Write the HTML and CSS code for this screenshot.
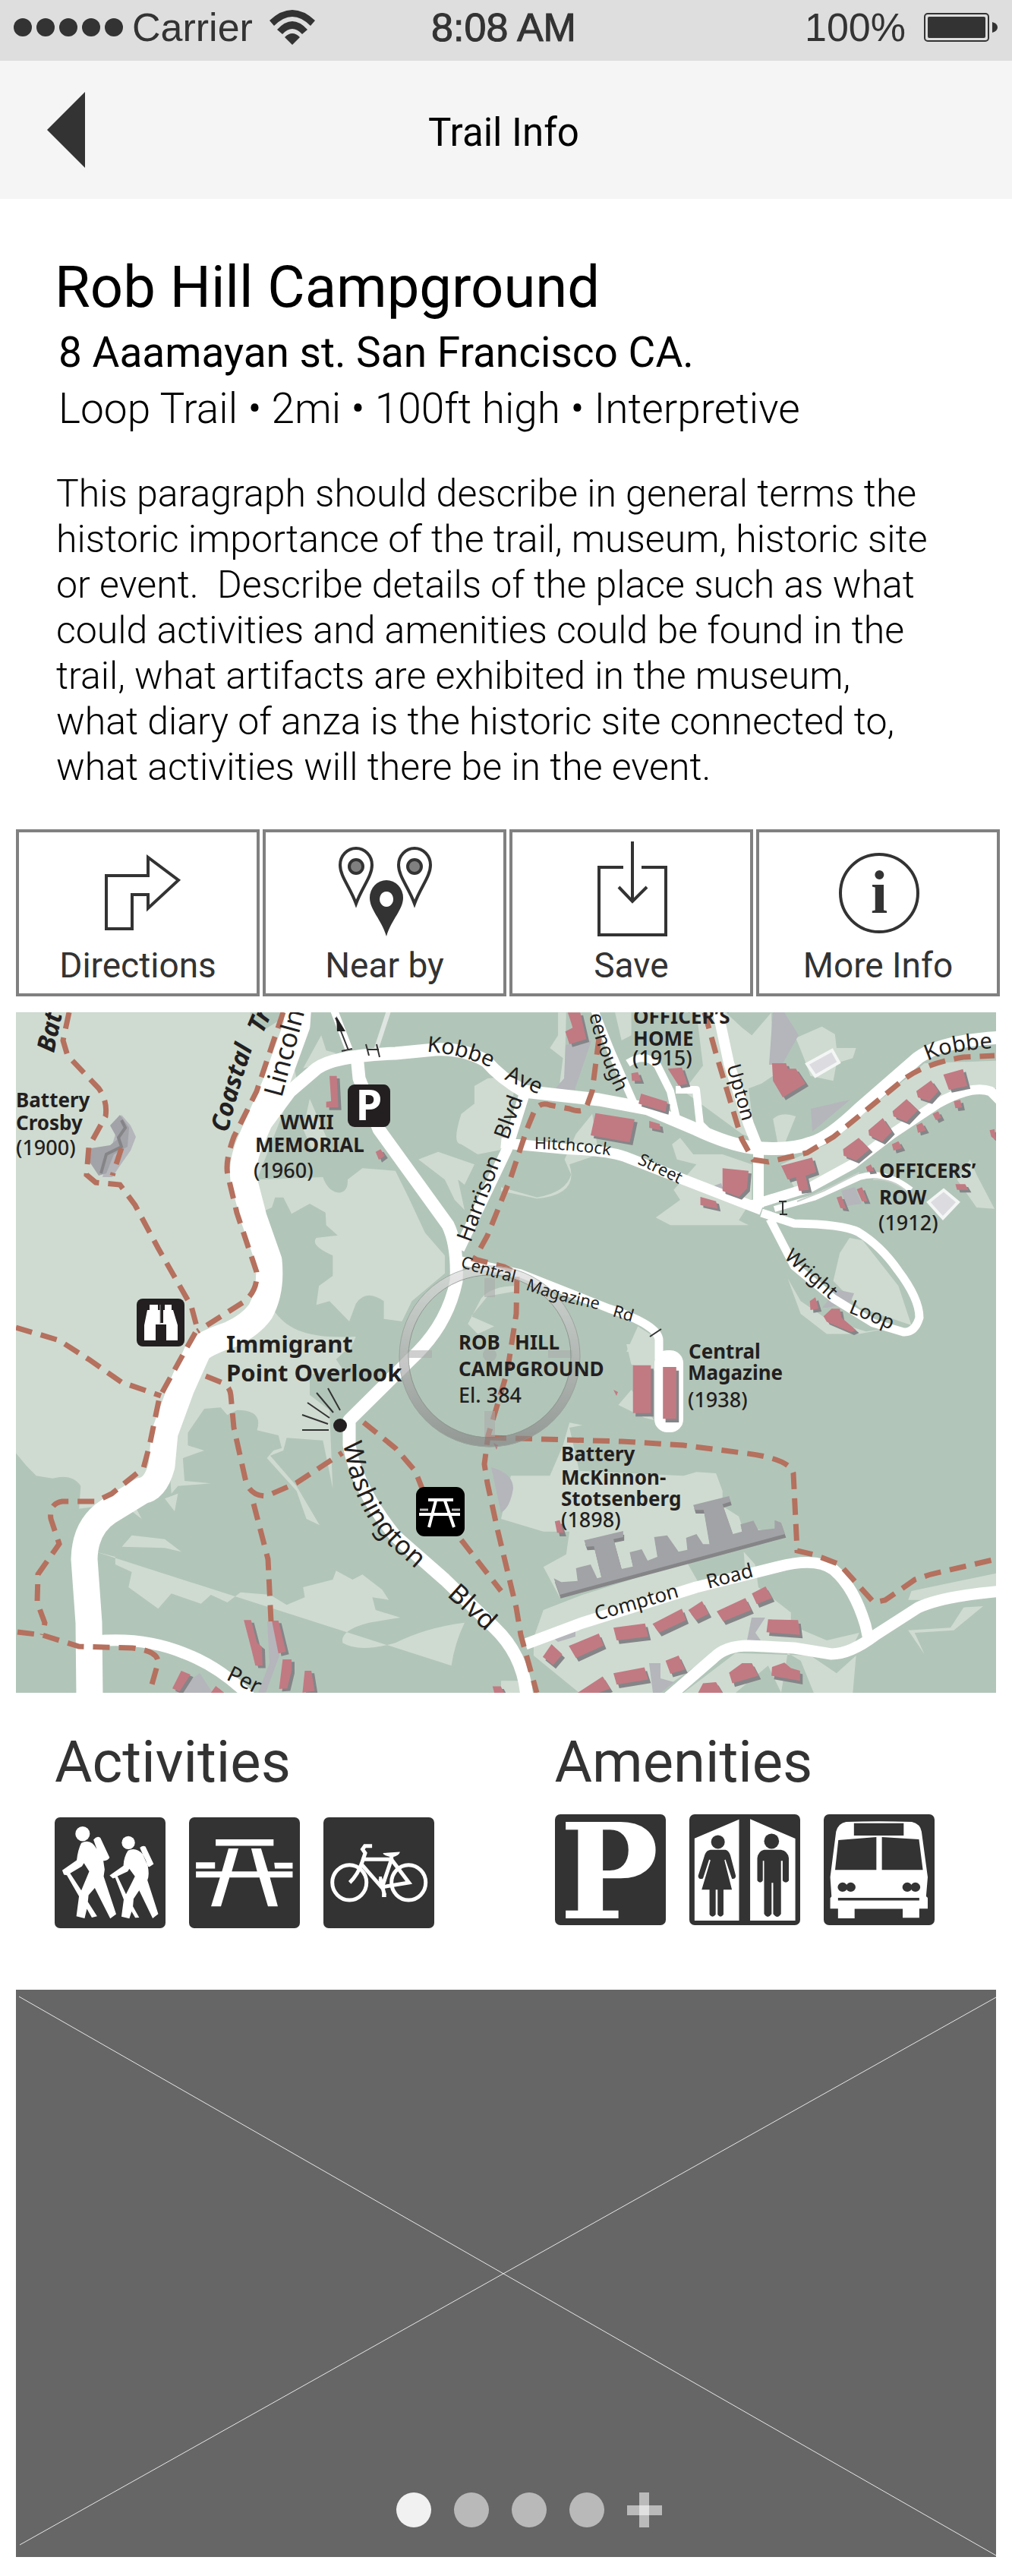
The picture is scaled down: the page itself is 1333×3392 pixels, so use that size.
FILE: index.html
```html
<!DOCTYPE html>
<html lang="en">
<head>
<meta charset="utf-8">
<meta name="viewport" content="width=device-width, initial-scale=1">
<title>Trail Info</title>
<link rel="stylesheet" href="styles.css">
</head>
<body>
<div class="status">
  <div class="status-left">
    <span class="signal"><i></i><i></i><i></i><i></i><i></i></span>
    <span>Carrier</span>
    <svg class="wifi" viewBox="0 0 60 46" aria-hidden="true"><path d="M0 14Q30 -14 60 14L54 21Q30 -3 6 21ZM10 26Q30 4 50 26L43 32Q30 18 17 32ZM20 36Q30 26 40 36L30 46Z"/></svg>
  </div>
  <div class="status-time">8:08 AM</div>
  <div class="status-right">
    <span>100%</span>
    <svg class="battery" viewBox="0 0 98 40" aria-hidden="true"><rect x="1" y="2" width="84" height="36" rx="4" fill="none" stroke="#333" stroke-width="2"/><rect x="5" y="6" width="76" height="28" rx="2"/><path d="M90 13Q97 15 97 20T90 27Z"/></svg>
  </div>
</div>

<header class="nav">
  <button class="back" type="button" aria-label="Back"><svg viewBox="0 0 50 100"><path d="M50 0V100L0 50Z"/></svg></button>
  <div class="nav-title">Trail Info</div>
</header>

<main>
  <section class="intro">
    <h1>Rob Hill Campground</h1>
    <p class="address">8 Aaamayan st. San Francisco CA.</p>
    <p class="facts">Loop Trail • 2mi • 100ft high • Interpretive</p>
    <p class="description">This paragraph should describe in general terms the<br>historic importance of the trail, museum, historic site<br>or event.&nbsp; Describe details of the place such as what<br>could activities and amenities could be found in the<br>trail, what artifacts are exhibited in the museum,<br>what diary of anza is the historic site connected to,<br>what activities will there be in the event.</p>
  </section>

  <div class="actions">
    <button type="button">
      <svg viewBox="102 1104 160 134" aria-hidden="true"><path class="line" d="M140 1153H195V1129L235 1159L195 1196V1178H174V1223H140Z"/></svg>
      <span>Directions</span>
    </button>
    <button type="button">
      <svg viewBox="426 1104 160 134" aria-hidden="true">
        <g class="line"><path d="M468 1190C460 1168 447 1154 447 1139A21 22 0 0 1 489 1139C489 1154 476 1168 468 1190Z"/><path d="M545 1190C537 1168 524 1154 524 1139A21 22 0 0 1 566 1139C566 1154 553 1168 545 1190Z"/><circle cx="468" cy="1141" r="9" fill="#808080"/><circle cx="545" cy="1141" r="9" fill="#808080"/></g>
        <path fill-rule="evenodd" d="M508 1233C501 1210 486 1198 486 1182A22 23 0 0 1 530 1182C530 1198 515 1210 508 1233ZM508 1174a9 10 0 1 0 .1 0Z"/>
      </svg>
      <span>Near by</span>
    </button>
    <button type="button">
      <svg viewBox="752 1104 160 134" aria-hidden="true"><path class="line" d="M821 1142H789V1231H877V1142H845M833 1108V1186M815 1168L833 1187L852 1168"/></svg>
      <span>Save</span>
    </button>
    <button type="button">
      <svg viewBox="1078 1104 160 134" aria-hidden="true"><circle class="line" cx="1159" cy="1176" r="51"/><text class="info-i" x="1159" y="1202" text-anchor="middle">i</text></svg>
      <span>More Info</span>
    </button>
  </div>

  <svg class="map" viewBox="21 1333 1291 896" role="img" aria-label="Map of the area around Rob Hill Campground">
    <defs>
      <linearGradient id="ring" x1="0" y1="0" x2="0" y2="1"><stop offset="0" stop-color="#ddd"/><stop offset="1" stop-color="#888"/></linearGradient>
      <path id="p-coastal" d="M300 1492Q316 1425 339 1362"/>
      <path id="p-kobbe" d="M562 1385Q612 1388 660 1412"/>
      <path id="p-kobbe2" d="M1222 1397Q1260 1380 1325 1380"/>
      <path id="p-green" d="M776 1336Q788 1392 818 1450"/>
      <path id="p-wash" d="M452 1900Q466 1990 514 2036L585 2099"/>
      <path id="p-central" d="M606 1668Q640 1680 690 1692"/>
      <path id="p-magazine" d="M692 1698Q740 1716 810 1728"/>
      <path id="p-hitch" d="M704 1513Q760 1513 830 1526"/>
      <path id="b-nw" d="M1000 290H1022L1027 415H990V392L1005 390ZM1140 590L1155 580 1168 605 1150 622Z"/>
      <path id="b-ne" d="M205 40H243L262 145 210 165 197 115 220 100ZM290 437L410 462 395 553 275 525ZM430 360L510 392 505 432 422 400ZM455 468L487 480 490 505 455 495ZM512 262L555 257 572 322 545 328ZM400 280L420 275 430 310 402 310ZM832 240H875L880 262 905 262 935 320 865 375 835 310ZM1358 285L1418 263 1432 330 1375 345ZM1275 350L1320 308 1343 350 1315 390 1280 375ZM1202 430L1245 382 1280 425 1245 472 1205 450ZM1128 505L1172 457 1200 510 1170 550 1130 525ZM1050 580L1098 535 1132 580 1090 625 1052 605ZM860 645L955 613 968 670 935 685 945 740 915 745 905 690 880 700ZM680 655L760 665 755 735 730 768 680 745ZM612 768L660 785 665 815 612 800ZM1275 485L1292 475 1305 505 1280 515ZM1325 440L1342 430 1352 455 1335 465ZM1390 390L1410 385 1415 415 1395 418ZM1200 560L1220 548 1232 575 1205 585ZM1120 650L1135 640 1145 665 1125 668ZM1395 718H1425L1435 740H1400ZM1030 770L1045 765 1060 815 1042 812ZM1092 738L1108 730 1125 785 1108 785ZM1500 505L1515 500 1520 545 1505 530ZM948 1180L965 1165 975 1210 950 1215ZM990 1240L1015 1210H1040L1045 1245 1090 1295 1075 1303 1000 1262Z"/>
      <path id="b-sw" d="M740 1090H762L780 1180 795 1195 797 1270H775L762 1200ZM825 1092H845L868 1215 845 1222ZM858 1245H885V1290L872 1360 847 1362ZM925 1290H945L955 1370 918 1377ZM550 1290L578 1305 545 1372 523 1360ZM640 1377L655 1350 680 1377ZM1495 1352H1520L1530 1377H1500Z"/>
      <path id="b-se" d="M405 83H460V272H405ZM497 90H538V295H497ZM165 700L180 695 192 745 172 745ZM128 1235L155 1185 188 1225 160 1268ZM208 1192L300 1143 315 1190 230 1240ZM345 1120L442 1103 452 1155 355 1170ZM465 1105L555 1045 568 1090 485 1140ZM575 1050L617 1015 638 1065 598 1090ZM662 1055L750 1003 768 1050 682 1095ZM770 985L812 957 832 1003 785 1027ZM820 1087L912 1090 918 1148 815 1138ZM345 1300L440 1277 452 1325 355 1345ZM235 1377L312 1313 335 1360 300 1377ZM505 1250L545 1230 565 1285 520 1302ZM700 1298L740 1260H770L790 1310 710 1340ZM832 1275L870 1258 890 1280 918 1290V1330L830 1310ZM605 1377L620 1340 660 1335 680 1377Z"/>
      <path id="battery" d="M162 925L185 940 235 935 230 885 275 870 295 925 308 920 285 798 262 800 255 775 375 738V762L345 770 370 888 405 878 395 822 432 810 450 855 480 840 470 762 510 755 545 820 572 812 568 765 600 750 620 790 640 790 622 655 595 655 590 635 700 600 705 622 680 632 712 750 740 740 735 712 775 697 790 735 840 728V695L860 705 872 750 180 990Z"/>
    </defs>
    <rect x="21" y="1333" width="1291" height="896" fill="#b2c5b9"/>

    <!-- open ground -->
    <g class="open">
      <path transform="translate(0 1320) scale(.434 .3333)" d="M48 40H760V80L800 110 860 60 900 300 780 700 820 1380H48ZM975 130L990 190 1020 200 980 240 920 260ZM780 700L980 690C1000 770 1060 770 1055 700L1100 655 1200 665 1240 770 1290 910 1350 1000V1070L1250 1180 1220 1260 1165 1250V1180Q1110 1130 1080 1190L1060 1260 1000 1180 960 1195 968 1120 1010 1080V1000Q940 960 960 930L1025 920 990 880 988 830 940 795 885 835 860 770H835L825 810 790 830ZM980 500L1000 560 950 590 920 500 940 380ZM1568 290L1480 300 1440 330V400L1400 440Q1370 560 1400 560L1450 600 1530 580ZM1330 590L1440 640 1410 720 1390 700 1410 820 1380 780 1350 700 1270 620ZM640 1380L830 1215C870 1290 930 1330 1080 1320L1060 1380ZM1568 1120Q1490 1120 1460 1170L1420 1270 1450 1310 1500 1280 1430 1240 1480 1160 1568 1140Z"/>
      <path transform="translate(660 1320) scale(.429 .3333)" d="M175 40H200L195 300 180 320 190 220 150 180 175 130ZM350 40H400V130L370 150ZM560 350L620 250 600 40H690L740 100 770 130 830 40 835 290 800 320 760 340 780 540 740 520ZM905 140L985 95 1025 125 1030 180 1090 180 1080 220 1030 240 1020 310 950 290 930 220ZM835 460Q860 430 905 450L870 560H850ZM860 640L1000 560 1300 240 1520 230V340L1400 340 1100 640 900 730ZM1400 700L1440 620 1460 680 1515 815 1460 810ZM525 560L550 535 590 600 680 600 770 640V780L730 860 760 880 520 880 475 850 550 780 530 740 600 640 540 620ZM1070 930L1110 940 1220 1120 1260 1275 1100 1205 1020 1100 1040 990ZM880 1090L920 1180 1000 1250 1120 1300 1200 1285 1100 1310 1000 1310 920 1230ZM0 730L110 770Q200 750 215 680L195 620 230 520 280 440 300 600 210 640Q240 760 110 775L0 745ZM420 1280L470 1320 480 1380H385Z"/>
      <path transform="translate(0 1770) scale(.434 .3333)" d="M48 0H650L560 300 540 500 300 640 240 650 245 560Q220 510 160 530L110 520 80 480 48 430ZM600 0H1070L1020 60 1040 100 940 120V200L1000 260 1010 570 980 380 870 370 860 420 820 440 900 560 970 715 930 690 900 580 810 450 830 420 855 410 845 360 780 340Q800 260 720 260L690 280 670 250 620 255 570 350 570 400 620 420 555 450 560 540 640 550 540 560 520 590 510 400ZM500 610L540 590 530 660ZM410 640L430 690 400 660ZM370 800L400 755 500 770 550 820 500 805ZM290 820L350 840 350 870 400 900 390 960 480 1045 520 985 610 1025 640 990 690 1020 730 980 820 990 870 1030 925 1000 920 960 1010 930 1020 895 1070 930 1100 910 1160 970 1180 1010 1130 1000 1140 1050 1215 1080 1120 1100Q1030 1130 1040 1180 1090 1220 1200 1180 1290 1120 1410 1100 1380 1180 1370 1270 1330 1300V1377H1110V1330H960L930 1210 880 1220 790 1120 720 1210 690 1240 720 1280H540L500 1210 400 1250 350 1290 370 1377H240V640L150 660 180 800 220 900 150 980 100 1040 180 1080V1140L48 1210 180 1330V1200L330 1200 300 960ZM600 660L635 720 630 790 600 740ZM680 750Q700 660 790 670L800 740 740 710 720 820 700 920 640 820 690 830ZM1000 500L1040 620 1180 800 1290 905 1390 850 1350 760 1250 700 1240 600 1260 540 1200 420 1100 350 1080 400ZM1170 310Q1200 300 1195 350L1160 370ZM1280 400L1370 460 1360 510 1280 470ZM1420 250L1440 310 1370 310ZM1400 540L1470 520 1500 800 1470 800 1480 680Z"/>
      <path transform="translate(660 1770) scale(.429 .3333)" d="M30 520L150 520 190 400 210 310 250 320 210 330 240 500 560 520 600 505 660 510 680 580V640L730 680 740 720 870 750 180 1000 130 880 200 830 210 740 130 740 0 690ZM385 0H490V110L400 80ZM360 240L400 180 470 300 440 290ZM100 1160L130 1050 250 990 570 860 610 950 750 900 745 820 780 870 790 960 890 1060V1110L1000 1170 1100 1140 1070 1220 700 1180 480 1377H240L100 1230ZM560 1377L720 1220 950 1230 1030 1300 1090 1230 1080 1377H960L920 1250 880 1220 860 1377 820 1270 720 1377ZM1250 1010L1260 975 1520 905V960L1300 1010ZM1250 1130L1380 1120 1420 1040 1480 1035 1390 1130 1270 1140 1300 1225ZM0 1330H80V1377H0Z"/>
    </g>
    <path fill="#b4b6bb" d="M745 1376L779 1370 757 1435H730L743 1420ZM1018 1333H1033L1052 1363 1030 1402H1013ZM1068 1460L1120 1448 1070 1490ZM1108 1568L1126 1563 1135 1585 1115 1588ZM938 1562L950 1558 955 1572 940 1570ZM1083 1722L1102 1698 1125 1703 1120 1715 1090 1722ZM647 1932Q676 1940 676 1960 672 1985 660 1992ZM352 2135H360L368 2180 350 2229H340L355 2190ZM230 2229L263 2203 280 2229ZM855 2190H870V2210L888 2215 870 2229H860ZM990 2130H1008L995 2150 1002 2160H984ZM730 2158L758 2145V2155L735 2162Z"/>
    <path fill="#b4b6bb" d="M160 1468L172 1482 179 1497 172 1515 158 1535 148 1550H135L150 1500Z"/>
    <path fill="#a2a3a8" d="M145 1482L158 1468 170 1485 168 1510 150 1520 140 1545 130 1548 118 1530 120 1512 145 1508 155 1500Z"/>
    <path fill="none" stroke="#858588" stroke-width="4" d="M160 1475L165 1485 156 1498 160 1510 140 1520 133 1545"/>

    <!-- roads -->
    <g class="road">
      <path stroke-width="35" d="M393 1320L391 1350 362 1430 330 1503Q318 1530 321 1553L334 1603 354 1660Q358 1700 343 1727 330 1745 304 1757 265 1770 260 1780L239 1827 217 1887 213 1930Q205 1960 187 1963L143 1990Q112 2010 111 2053L117 2137 118 2235"/>
      <path stroke-width="17" d="M350 1480L382 1437 417 1407Q440 1390 521 1387L573 1382Q610 1380 640 1397 660 1420 690 1437L789 1448 853 1460 917 1487Q960 1507 990 1511 1040 1516 1068 1505 1090 1500 1132 1460L1209 1393Q1240 1370 1320 1366"/>
      <path stroke-width="17" d="M470 1390L473 1420 499 1487 590 1613Q603 1640 601 1687 590 1740 551 1780L460 1870V1903Q470 1960 521 2023L586 2080 651 2143Q690 2180 694 2235"/>
      <path stroke-width="14" d="M605 1645L668 1513 690 1443M660 1505L746 1513Q800 1515 823 1523L900 1553 1003 1593"/>
      <path stroke-width="14" d="M943 1320L960 1400 986 1480 999 1513V1590"/>
      <path stroke-width="10" d="M781 1325L806 1387 835 1453M438 1325L460 1383M827 1400Q850 1385 866 1403L883 1437 892 1477M890 1435H917L922 1480 932 1490"/>
      <path stroke-width="13" d="M990 1587L1068 1563 1123 1533 1175 1493 1235 1453Q1280 1428 1305 1437L1318 1450"/>
      <path stroke-width="8" d="M1020 1592L1072 1577 1132 1550Q1165 1540 1200 1567"/>
      <path stroke-width="11" d="M1003 1597L1046 1611Q1110 1612 1130 1622 1160 1640 1183 1673 1211 1710 1211 1735 1205 1755 1190 1754L1150 1742 1098 1710 1046 1667 1014 1605"/>
      <path stroke-width="11" d="M607 1660L686 1677 802 1723Q868 1745 868 1765V1790"/>
      <rect x="867" y="1783" width="28" height="98" rx="12" stroke-width="10" fill="#fff"/>
      <path stroke-width="15" d="M692 2165L767 2137 917 2090 1025 2063Q1075 2050 1098 2067 1125 2090 1140 2140L1145 2163M880 2235L940 2183Q956 2167 986 2167L1046 2170 1095 2178Q1120 2178 1153 2153L1209 2117Q1240 2102 1320 2095"/>
      <path stroke-width="15" d="M125 2161Q190 2155 243 2177 290 2195 330 2235"/>
      <path stroke-width="6" stroke="#dfe6e1" d="M514 1325L495 1383"/>
    </g>
    <path fill="none" stroke="#c6cfc9" stroke-width="2" d="M1050 1582L1085 1568 1132 1544M1150 1553Q1175 1552 1192 1567"/>
    <g fill="#dcdce0" stroke="#f4f6f5" stroke-width="4"><path d="M1063 1401L1096 1383 1105 1399 1074 1417Z"/><path d="M1223 1583L1243 1567 1262 1583 1242 1604Z"/></g>

    <!-- buildings -->
    <g transform="translate(0 1320) scale(.434 .3333)"><use href="#b-nw" class="shade" x="9" y="10"/><use href="#b-nw" class="building"/></g>
    <g transform="translate(660 1320) scale(.429 .3333)"><use href="#b-ne" class="shade" x="9" y="11"/><use href="#b-ne" class="building"/></g>
    <g transform="translate(0 1770) scale(.434 .3333)"><use href="#b-sw" class="shade" x="9" y="10"/><use href="#b-sw" class="building"/></g>
    <g transform="translate(660 1770) scale(.429 .3333)"><use href="#b-se" class="shade" x="8" y="14"/><use href="#b-se" class="building"/><use href="#battery" fill="#858588" x="3" y="14"/><use href="#battery" fill="#a2a3a6"/></g>
    <path class="building" d="M650 1900L656 1903 654 1909ZM808 1830L814 1833 812 1838Z"/>

    <!-- footpaths -->
    <g class="trail">
      <path d="M91 1333L83 1370 89 1390 130 1433Q142 1450 139 1470L117 1510 114 1547 126 1557 158 1560 178 1587 208 1643 252 1720 260 1750 243 1780 210 1840 197 1903 189 1933 147 1967 126 1977H82Q64 1980 67 2000L78 2033 50 2073 49 2110 59 2137 56 2153"/>
      <path d="M373 1333L338 1437 308 1497Q296 1530 300 1547L312 1597 338 1675Q340 1700 320 1715L260 1753"/>
      <path d="M21 1748L78 1765 117 1790 160 1820 212 1838"/>
      <path d="M271 1812L291 1820Q303 1825 304 1837L308 1880 323 1947Q328 1970 351 1970L390 1953 451 1913"/>
      <path d="M334 1980L353 2053 357 2135"/>
      <path d="M23 2149L56 2153 104 2168 174 2170Q210 2174 208 2190L197 2229"/>
      <path d="M479 1873L521 1907 547 1937 560 1970 607 2027 660 2095"/>
      <path d="M160 1512L148 1548"/>
      <path d="M789 1367L780 1437 772 1459Q766 1466 750 1460L724 1455Q710 1450 703 1465L694 1487 673 1550 642 1627 625 1658 664 1668 681 1677 680 1730 668 1807 643 1890 638 1928 642 1953 655 2013 680 2117 686 2153 707 2229"/>
      <path d="M645 1893L819 1898 900 1903 977 1913Q1040 1920 1045 1940L1050 2042 1072 2047 1106 2060 1151 2110 1166 2107 1205 2080 1226 2073 1312 2053"/>
      <path d="M928 1333L943 1387 977 1500 992 1527 1012 1530 1063 1518 1098 1497 1192 1420Q1220 1400 1269 1392L1310 1390"/>
    </g>

    <!-- centre marker -->
    <g opacity=".7">
      <circle cx="645" cy="1786" r="113" fill="none" stroke="url(#ring)" stroke-width="13"/>
      <path fill="#aaa" opacity=".8" d="M638 1683h14v25h-14ZM536 1778h33v10h-33ZM722 1778h32v10h-32ZM638 1858h14v34h-14Z"/>
      <circle cx="645" cy="1786" r="107" fill="none" stroke="#7d8680" stroke-width="1"/>
      <circle cx="645" cy="1786" r="119" fill="none" stroke="#8f9892" stroke-width="1"/>
    </g>
    <circle cx="645" cy="1784" r="9" fill="#a9b5ae"/>

    <!-- viewpoint -->
    <circle cx="448" cy="1877" r="9" fill="#231f20"/>
    <path fill="none" stroke="#333" stroke-width="2" d="M448 1857L432 1828M439 1860L417 1834M434 1867L405 1847M432 1875L398 1863M433 1883H398M442 1340L459 1383M450 1384L464 1381M482 1375L486 1390M496 1375L500 1392M483 1382H499M856 1760L871 1750M1026 1582H1036M1031 1582V1598M1027 1599H1037"/>
    <path fill="#222" d="M443 1338L455 1358 444 1358Z"/>

    <!-- place names -->
    <g class="place">
      <text x="21" y="1458">Battery</text><text x="21" y="1488">Crosby</text><text class="year" x="21" y="1521">(1900)</text>
      <text x="369" y="1487">WWII</text><text x="336" y="1517">MEMORIAL</text><text class="year" x="334" y="1551">(1960)</text>
      <text x="834" y="1348">OFFICER’S</text><text x="834" y="1377">HOME</text><text class="year" x="833" y="1403">(1915)</text>
      <text x="1158" y="1551">OFFICERS’</text><text x="1158" y="1586">ROW</text><text class="year" x="1157" y="1620">(1912)</text>
      <text x="604" y="1777">ROB</text><text x="678" y="1777">HILL</text><text x="604" y="1812">CAMPGROUND</text><text class="year" x="604" y="1847">El. 384</text>
      <text x="907" y="1789">Central</text><text x="906" y="1817">Magazine</text><text class="year" x="906" y="1853">(1938)</text>
      <text x="739" y="1924">Battery</text><text x="739" y="1955">McKinnon-</text><text x="739" y="1983">Stotsenberg</text><text class="year" x="739" y="2011">(1898)</text>
      <g class="overlook"><text x="298" y="1781">Immigrant</text><text x="298" y="1819">Point Overlook</text></g>
    </g>
    <g class="trail-name"><text><textPath href="#p-coastal">Coastal</textPath></text><text transform="translate(346 1362) rotate(-66)">Tra</text><text transform="translate(71 1387) rotate(-78)">Bat</text></g>
    <g class="street">
      <g class="s32"><text transform="translate(371 1446) rotate(-75)">Lincoln</text><text transform="translate(588 2101) rotate(42)">Blvd</text><text><textPath href="#p-wash">Washington</textPath></text></g>
      <g class="s28"><text><textPath href="#p-kobbe">Kobbe</textPath></text><text transform="translate(664 1421) rotate(24)">Ave</text><text><textPath href="#p-kobbe2">Kobbe</textPath></text><text transform="translate(620 1637) rotate(-70)">Harrison</text><text transform="translate(669 1502) rotate(-70)">Blvd</text><text transform="translate(297 2211) rotate(26)">Per</text></g>
      <g class="s24"><text transform="translate(957 1404) rotate(74)">Upton</text><text><textPath href="#p-green">eenough</textPath></text><text transform="translate(1032 1656) rotate(42)">Wright</text><text transform="translate(1117 1728) rotate(22)">Loop</text><text transform="translate(786 2134) rotate(-16)">Compton</text><text transform="translate(933 2092) rotate(-15)">Road</text></g>
      <g class="s20"><text><textPath href="#p-hitch">Hitchcock</textPath></text><text transform="translate(839 1532) rotate(26)">Street</text><text><textPath href="#p-central">Central</textPath></text><text><textPath href="#p-magazine">Magazine</textPath></text><text transform="translate(806 1733) rotate(16)">Rd</text></g>
    </g>

    <!-- map symbols -->
    <rect x="458" y="1428" width="56" height="56" rx="9" fill="#231f20"/><text class="symbol-p" x="486" y="1475" text-anchor="middle">P</text>
    <rect x="180" y="1710" width="63" height="63" rx="8" fill="#231f20"/>
    <path fill="#fff" d="M197 1718H208V1725H211V1742H215V1725H217V1718H226V1725H228L234 1745V1765H219V1744H205V1765H190V1745L194 1725H197Z"/><path stroke="#999" d="M211 1718V1743"/>
    <rect x="548" y="1958" width="64" height="65" rx="11"/>
    <path fill="none" stroke="#fff" stroke-width="4" d="M564 1975H597M552 1994H606M574 1976L565 2011M586 1976L598 2011"/><path stroke="#bbb" stroke-width="3" d="M553 1988H564M595 1988H606"/>
  </svg>

  <div class="features">
    <section>
      <h2>Activities</h2>
      <div class="icons activities">
        <svg viewBox="165 399 337 437" preserveAspectRatio="none" role="img" aria-label="Hiking">
          <g fill="#fff"><ellipse cx="250" cy="464" rx="22" ry="29"/><path d="M246 500Q275 480 293 524L283 487Q294 470 304 480L332 558Q326 572 313 570L317 605 314 632 352 781 334 798 287 677 268 706 266 732 294 789 278 794 263 760 256 797 231 789 239 710 202 627 193 625 188 608 232 568Q236 525 246 500ZM254 579L248 592 212 620 246 687 270 612Z"/><ellipse cx="389" cy="499" rx="20" ry="26"/><path d="M388 530Q413 515 433 545 444 570 448 592L453 594 466 583 441 514Q433 508 424 519L448 590Q454 625 447 647L480 780 463 797 422 687 405 720 403 750 422 794 410 795 399 770 392 798 368 790 375 723 349 637 342 640 332 628 374 590Q375 555 388 530ZM392 602L387 612 356 631 382 702 409 632Z"/></g>
        </svg>
        <svg viewBox="574 399 337 437" preserveAspectRatio="none" role="img" aria-label="Picnic area">
          <path fill="#fff" d="M655 486H831V511H655ZM694 522H724L704 612H781L763 522H793L814 612H889V636H820L844 750H814L788 636H697L671 750H641L668 636H595V612H674ZM595 576H653V601H595ZM833 578H889V601H835Z"/>
        </svg>
        <svg class="bike" viewBox="980 399 337 437" preserveAspectRatio="none" role="img" aria-label="Cycling">
          <g fill="none" stroke="#fff" stroke-width="5"><ellipse cx="1059" cy="656" rx="52" ry="69"/><ellipse cx="1239" cy="656" rx="52" ry="69"/><path d="M1128 512H1106L1099 525 1107 540 1098 575Q1085 625 1060 656M1096 564H1186M1093 580L1158 676 1187 564 1187 545M1186 564L1240 656 1158 674M1153 640L1166 706M1149 640H1158M1158 706H1171"/></g><path fill="#fff" d="M1161 540L1213 535Q1210 550 1190 556 1165 552 1161 540Z"/>
        </svg>
      </div>
    </section>
    <section>
      <h2>Amenities</h2>
      <div class="icons amenities">
        <svg viewBox="0 0 146 146" role="img" aria-label="Parking"><text class="park" x="6" y="137">P</text></svg>
        <svg viewBox="575 387 341 437" preserveAspectRatio="none" role="img" aria-label="Restrooms">
          <path fill="#fff" d="M591 482L728 407V806H591ZM762 406L901 483V806H762Z"/>
          <g fill="#333"><ellipse cx="663" cy="496" rx="21" ry="27"/><path d="M640 527H686Q696 530 701 548L718 630Q716 644 706 641L686 565 683 568 706 684H680V782Q671 798 662 782V684H656V782Q646 798 637 782V684H613L640 568 636 565 617 640Q604 646 602 630L623 545Q628 529 640 527Z"/><ellipse cx="828" cy="493" rx="23" ry="30"/><path d="M805 527H857Q878 532 881 560V648Q872 664 862 648V570H857V780Q846 802 833 780V657H828V780Q816 802 805 780V570H801V648Q793 664 784 648V560Q787 532 805 527Z"/></g>
        </svg>
        <svg viewBox="987 387 341 437" preserveAspectRatio="none" role="img" aria-label="Bus stop">
          <path fill="#fff" d="M1056 417Q1156 412 1258 417 1284 425 1288 455L1307 635 1302 710 1307 716V759H1281V795H1230V760H1082V797H1031V759H1007V717L1011 711 1007 635 1025 455Q1032 422 1056 417Z"/>
          <path fill="#333" d="M1080 422H1233V471H1080ZM1032 489L1149 477V606H1022ZM1166 477L1280 486 1292 606H1166ZM1031 716H1281V727H1031Z"/>
          <g fill="#333"><ellipse cx="1045" cy="674" rx="15" ry="18"/><ellipse cx="1070" cy="674" rx="15" ry="18"/><ellipse cx="1244" cy="674" rx="15" ry="18"/><ellipse cx="1269" cy="674" rx="15" ry="18"/></g>
        </svg>
      </div>
    </section>
  </div>

  <section class="photo" aria-label="Photos">
    <svg class="cross" viewBox="0 0 1291 747" preserveAspectRatio="none" aria-hidden="true"><path d="M4 9L1291 745M1291 10L5 731"/></svg>
    <div class="pager">
      <button type="button" class="dot current" aria-label="Photo 1"></button>
      <button type="button" class="dot" aria-label="Photo 2"></button>
      <button type="button" class="dot" aria-label="Photo 3"></button>
      <button type="button" class="dot" aria-label="Photo 4"></button>
      <button type="button" class="add" aria-label="Add photo"><svg viewBox="0 0 46 46"><path d="M0 17H46V30H0Z"/><path d="M16 0H29V46H16Z"/></svg></button>
    </div>
  </section>
</main>
</body>
</html>
```

FILE: styles.css
```css
* { box-sizing: border-box; }
body { margin: 0; background: #fff; color: #000; font-family: Roboto, sans-serif; }
h1, h2, p { margin: 0; font-weight: 400; }
button { margin: 0; padding: 0; border: 0; background: none; font: inherit; color: inherit; }
svg { display: block; }

.status {
  display: grid;
  grid-template-columns: 1fr auto 1fr;
  align-items: center;
  height: 80px;
  padding: 0 18px 8px 18px;
  background: #dedede;
  color: #333;
  font: 52px/60px "Liberation Sans", sans-serif;
}
.status svg { fill: #333; }
.status-left, .status-right { display: flex; align-items: center; }
.status-left { gap: 12px; }
.status-right { justify-content: flex-end; gap: 24px; }
.status-time { padding-right: 6px; -webkit-text-stroke: 1px #333; }
.signal { display: flex; gap: 6px; }
.signal i { width: 24px; height: 24px; border-radius: 50%; background: #333; }
.wifi { width: 60px; height: 46px; margin-left: 10px; }
.battery { width: 98px; height: 40px; }

.nav {
  display: grid;
  grid-template-columns: 1fr auto 1fr;
  align-items: center;
  height: 182px;
  padding: 0 68px 0 62px;
  background: #f5f5f5;
}
.nav-title { padding-top: 8px; font-size: 51px; line-height: 60px; }
.back { width: 50px; height: 100px; }
.back svg { width: 50px; height: 100px; fill: #333; }

.intro { padding: 72px 72px 0; }
h1 { font-size: 76px; line-height: 88px; }
.address { margin-top: 10px; padding-left: 5px; font-size: 55px; line-height: 64px; }
.facts { margin-top: 10px; padding-left: 5px; font-size: 55px; line-height: 64px; font-weight: 300; }
.description { margin-top: 50px; padding-left: 2px; font-size: 50px; line-height: 60px; font-weight: 300; white-space: nowrap; }

.actions {
  display: grid;
  grid-template-columns: repeat(4, 1fr);
  gap: 4px;
  margin: 52px 16px 0 21px;
}
.actions button {
  display: flex;
  flex-direction: column;
  align-items: center;
  height: 220px;
  padding-top: 8px;
  border: 4px solid #808080;
  background: #fff;
  color: #333;
  font-size: 46px;
  line-height: 56px;
}
.actions svg { width: 160px; height: 134px; fill: #333; }
.actions span { padding-top: 5px; }
.actions .line { fill: none; stroke: #333; stroke-width: 4px; }
.info-i { font: bold 80px "Liberation Serif", serif; }

.map { width: calc(100% - 42px); height: auto; margin: 21px 21px 0; }
.open { fill: #cfdbd1; }
.road { fill: none; stroke: #fff; stroke-linejoin: round; }
.trail { fill: none; stroke: #b5705e; stroke-width: 7px; stroke-dasharray: 22px 12px; }
.building { fill: #c17a82; }
.shade { fill: #858588; }
.map text { fill: #231f20; font-family: "Noto Sans", "Open Sans", sans-serif; }
.place text { font-size: 26px; font-weight: 700; }
.place .year { font-size: 27px; font-weight: 500; }
.place .overlook text { font-size: 31px; }
.trail-name text { font-size: 33px; font-weight: 700; font-style: italic; }
.street .s32 text { font-size: 35px; }
.street .s28 text { font-size: 29px; }
.street .s24 text { font-size: 26px; }
.street .s20 text { font-size: 22px; }
.map .symbol-p { fill: #fff; font-size: 56px; font-weight: 700; }

.features {
  display: grid;
  grid-template-columns: 1fr 1fr;
  column-gap: 56px;
  margin-top: 47px;
  padding-left: 72px;
  color: #333;
}
h2 { font-size: 76px; line-height: 88px; }
.icons { display: flex; gap: 31px; }
.activities { padding-top: 29px; }
.amenities { padding-top: 25px; }
.icons svg { width: 146px; height: 146px; border-radius: 7px; background: #333; }
.bike path, .bike ellipse { vector-effect: non-scaling-stroke; }
.park { fill: #fff; font: bold 174px "DejaVu Serif", serif; }
.map ~ .features .park { font-family: "DejaVu Serif", serif; }

.photo {
  position: relative;
  display: flex;
  align-items: flex-end;
  justify-content: center;
  aspect-ratio: 1291 / 747;
  margin: 81px 21px 25px;
  padding: 0 0 39px 60px;
  background: #666;
}
.cross { position: absolute; inset: 0; width: 100%; height: 100%; fill: none; stroke: #e6e6e6; stroke-width: 1px; }
.pager { position: relative; display: flex; gap: 30px; }
.dot { width: 46px; height: 46px; border-radius: 50%; background: #b9b9b9; }
.dot.current { background: #f1f1f1; }
.add svg { width: 46px; height: 46px; fill: #fff; fill-opacity: .55; }
```
